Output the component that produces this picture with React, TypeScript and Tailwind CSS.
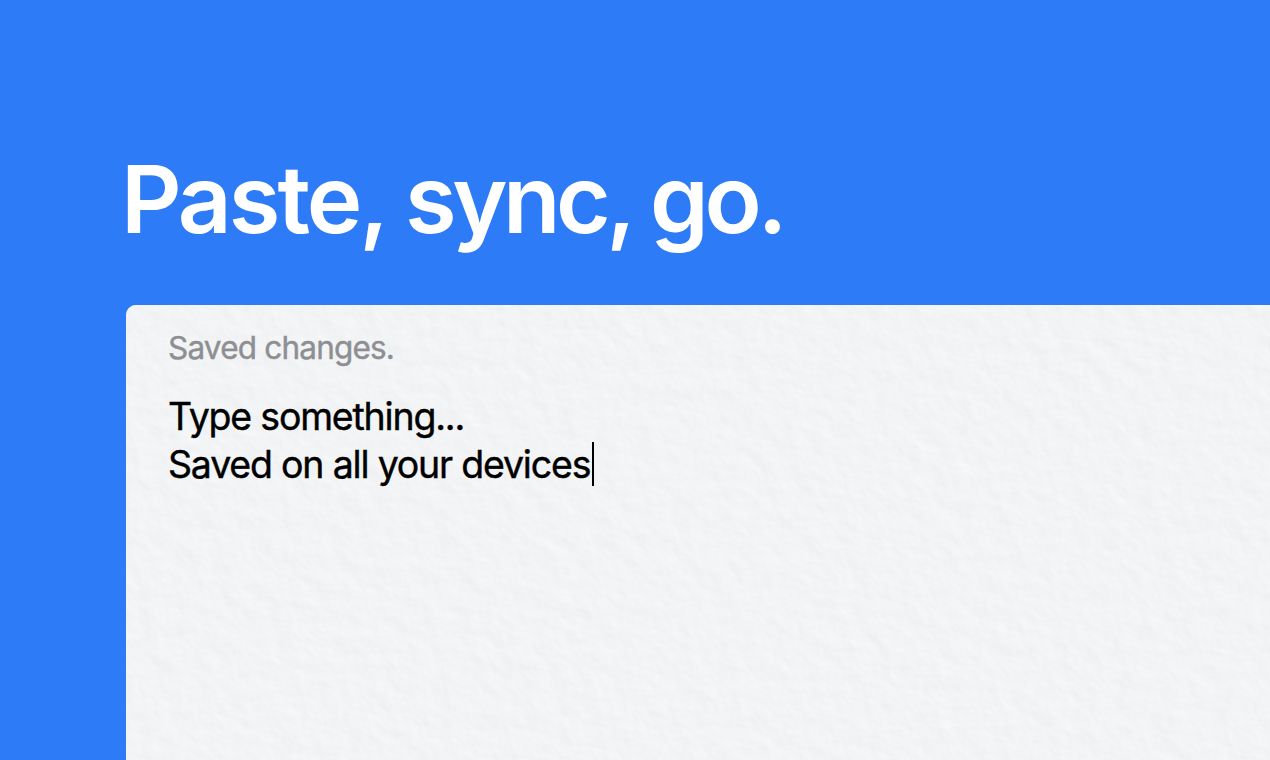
const PaperTexture = () => {
  return (
    <svg className="absolute inset-0 h-full w-full" aria-hidden="true">
      <filter id="paper" x="0" y="0" width="100%" height="100%" colorInterpolationFilters="sRGB">
        <feTurbulence type="fractalNoise" baseFrequency="0.05 0.055" numOctaves="3" seed="8" result="noise" />
        <feDiffuseLighting in="noise" surfaceScale="0.22" diffuseConstant="1.07" lightingColor="#f9fbfc">
          <feDistantLight azimuth="315" elevation="65" />
        </feDiffuseLighting>
      </filter>
      <rect width="100%" height="100%" filter="url(#paper)" />
    </svg>
  )
}

const Note = () => {
  return (
    <section className="relative flex-grow overflow-hidden rounded-tl-[10px] bg-[#f1f3f4]">
      <PaperTexture />
      <div className="relative px-[42.5px] pt-[23px] [-webkit-text-stroke:0.4px_currentColor]">
        <p className="text-[31.5px] leading-[40px] tracking-[-0.8px] text-[#8e8f92]">Saved changes.</p>
        <div className="mt-[25px] text-[37.5px] leading-[48px] tracking-[-1.2px] text-black">
          <p>Type something...</p>
          <p className="flex items-center">
            Saved on all your devices
            <span className="mb-[2px] ml-[2px] h-[44px] w-[2px] bg-black" />
          </p>
        </div>
      </div>
    </section>
  )
}

export default function App() {
  return (
    <main className="flex h-screen flex-col overflow-hidden bg-[#2d7bf7] pl-[125.5px] font-[Inter,sans-serif]">
      <h1 className="-ml-[4.5px] pt-[143px] text-[94px] leading-[112px] font-semibold text-white">
        <span className="tracking-[-3px]">Paste, </span>
        <span className="tracking-[-4.5px]">sync,</span>
        <span className="tracking-[-5.5px]"> </span>
        <span className="tracking-[-4.2px]">go.</span>
      </h1>
      <div className="flex flex-grow pt-[50px]">
        <Note />
      </div>
    </main>
  )
}
